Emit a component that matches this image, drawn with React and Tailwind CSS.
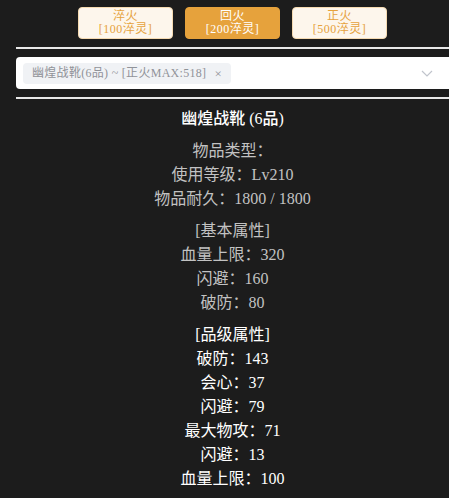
const fontStack = { fontFamily: '"Liberation Serif", "Noto Sans CJK SC", serif' };

const buttons = [
  { name: "淬火", cost: "[100淬灵]", active: false },
  { name: "回火", cost: "[200淬灵]", active: true },
  { name: "正火", cost: "[500淬灵]", active: false },
];

const baseAttrs = ["血量上限：320", "闪避：160", "破防：80"];
const gradeAttrs = [
  "破防：143",
  "会心：37",
  "闪避：79",
  "最大物攻：71",
  "闪避：13",
  "血量上限：100",
];

export default function App() {
  return (
    <div
      className="min-h-screen bg-[#1c1c1c] pl-4 pt-[7px] text-[16px]"
      style={fontStack}
    >
      {/* 淬火 buttons */}
      <div className="flex justify-center gap-3">
        {buttons.map((b) => (
          <button
            key={b.name}
            className={
              b.active
                ? "w-[95px] h-8 rounded-[4px] border border-[#e6a23c] bg-[#e6a23c] text-white text-[12px] leading-[13px] tracking-[0.5px]"
                : "w-[95px] h-8 rounded-[4px] border border-[#f5dab1] bg-[#fdf6ec] text-[#e6a23c] text-[12px] leading-[13px] tracking-[0.5px]"
            }
          >
            <div>{b.name}</div>
            <div>{b.cost}</div>
          </button>
        ))}
      </div>

      <div className="mt-2 border-t-2 border-[#e8e8e8]" />

      {/* item select */}
      <div className="mt-[8px] h-8 bg-white rounded-l-[4px] flex items-center pl-[7px] pr-3">
        <span className="h-[21px] flex items-center gap-[8px] rounded-[4px] bg-[#f0f2f5] px-[9px] text-[12px] text-[#909399] tracking-[0.3px]">
          幽煌战靴(6品) ~ [正火MAX:518]
          <span className="text-[13px] leading-none">×</span>
        </span>
        <svg
          className="ml-auto mr-[4px]"
          width="12"
          height="12"
          viewBox="0 0 12 12"
          fill="none"
          stroke="#c0c4cc"
          strokeWidth="1.2"
        >
          <path d="M1 4l5 5 5-5" />
        </svg>
      </div>

      <div className="mt-[8px] border-t-2 border-[#e8e8e8]" />

      {/* item details */}
      <div className="pt-2 text-center leading-6">
        <div className="text-white font-medium">幽煌战靴 (6品)</div>

        <div className="mt-2 text-[#c2c2c2]">
          <div>物品类型：</div>
          <div>使用等级：Lv210</div>
          <div>物品耐久：1800 / 1800</div>
        </div>

        <div className="mt-2 text-[#c2c2c2]">
          <div>[基本属性]</div>
          {baseAttrs.map((a) => (
            <div key={a}>{a}</div>
          ))}
        </div>

        <div className="mt-2 text-white">
          <div>[品级属性]</div>
          {gradeAttrs.map((a, i) => (
            <div key={i}>{a}</div>
          ))}
        </div>
      </div>
    </div>
  );
}
